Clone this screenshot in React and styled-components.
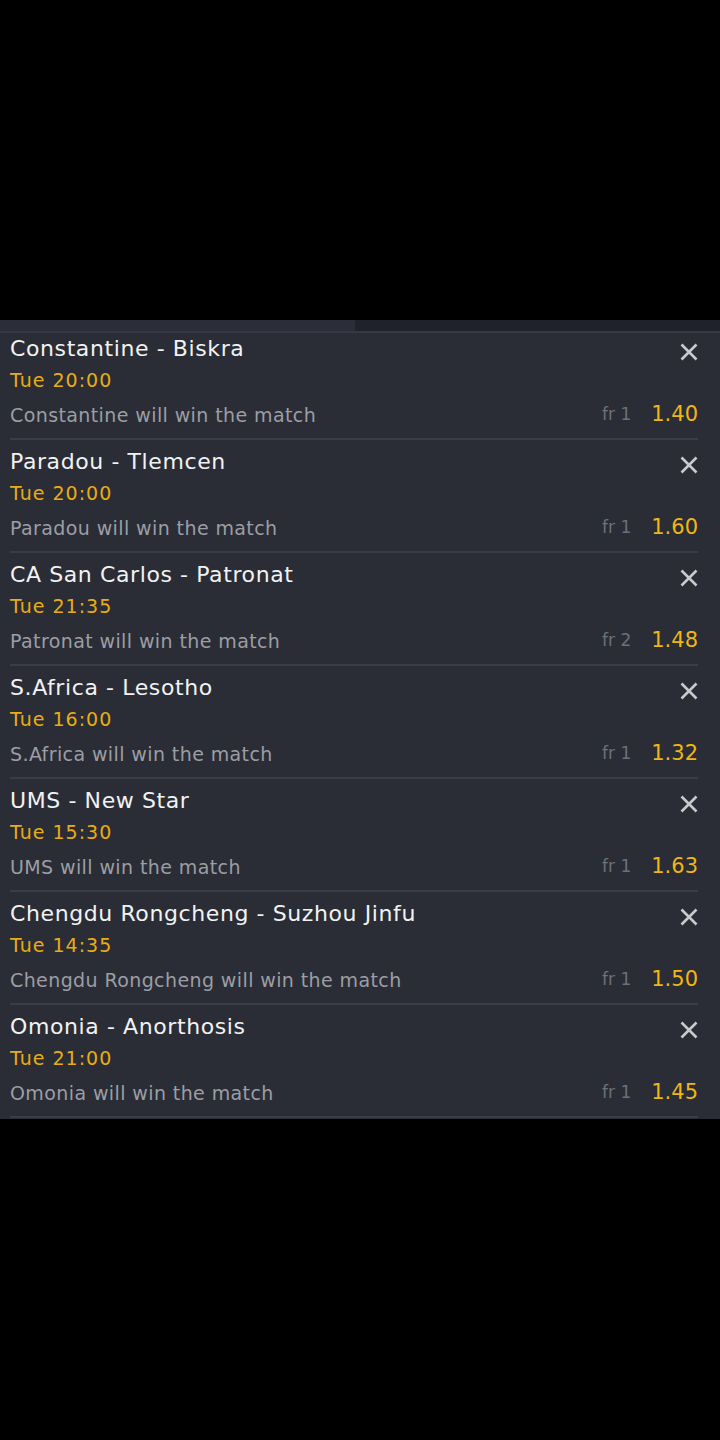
import React from "react";
import styled, { createGlobalStyle } from "styled-components";

const bets = [
  { match: "Constantine - Biskra", time: "Tue 20:00", pick: "Constantine will win the match", fr: "fr 1", odds: "1.40" },
  { match: "Paradou - Tlemcen", time: "Tue 20:00", pick: "Paradou will win the match", fr: "fr 1", odds: "1.60" },
  { match: "CA San Carlos - Patronat", time: "Tue 21:35", pick: "Patronat will win the match", fr: "fr 2", odds: "1.48" },
  { match: "S.Africa - Lesotho", time: "Tue 16:00", pick: "S.Africa will win the match", fr: "fr 1", odds: "1.32" },
  { match: "UMS - New Star", time: "Tue 15:30", pick: "UMS will win the match", fr: "fr 1", odds: "1.63" },
  { match: "Chengdu Rongcheng - Suzhou Jinfu", time: "Tue 14:35", pick: "Chengdu Rongcheng will win the match", fr: "fr 1", odds: "1.50" },
  { match: "Omonia - Anorthosis", time: "Tue 21:00", pick: "Omonia will win the match", fr: "fr 1", odds: "1.45" },
];

function CloseIcon() {
  return (
    <svg width="18" height="18" viewBox="0 0 18 18">
      <path d="M1.5 1.5 L16.5 16.5 M16.5 1.5 L1.5 16.5" stroke="#c9cacd" strokeWidth="2.6" fill="none" />
    </svg>
  );
}

export default function App() {
  return (
    <>
      <GlobalStyle />
      <Screen>
        <Panel>
          <TabStrip>
            <Tab active />
            <Tab />
          </TabStrip>
          <List>
            <Scroller>
              {bets.map((b) => (
                <Row key={b.match}>
                  <Info>
                    <Match>{b.match}</Match>
                    <Time>{b.time}</Time>
                    <Pick>{b.pick}</Pick>
                  </Info>
                  <Side>
                    <Close>
                      <CloseIcon />
                    </Close>
                    <OddsLine>
                      <Fr>{b.fr}</Fr>
                      <Odds>{b.odds}</Odds>
                    </OddsLine>
                  </Side>
                </Row>
              ))}
            </Scroller>
          </List>
        </Panel>
      </Screen>
    </>
  );
}

const GlobalStyle = createGlobalStyle`
  body {
    margin: 0;
    background: #000;
    font-family: "DejaVu Sans", "Open Sans", sans-serif;
  }
`;

const Screen = styled.div`
  width: 720px;
  height: 1440px;
  background: #000;
  padding-top: 320px;
  box-sizing: border-box;
`;

const Panel = styled.div`
  background: #2a2d36;
  height: 799px;
  display: flex;
  flex-direction: column;
`;

const TabStrip = styled.div`
  display: flex;
  height: 11px;
  border-bottom: 2px solid #363943;
`;

const Tab = styled.div`
  flex: ${(p) => (p.active ? "0 0 355px" : "1")};
  background: ${(p) => (p.active ? "#2b2e38" : "#1f222a")};
`;

const List = styled.div`
  flex: 1;
  overflow: hidden;
`;

const Scroller = styled.div`
  margin-top: -6px;
`;

const Row = styled.div`
  display: flex;
  justify-content: space-between;
  margin: 0 22px 0 10px;
  height: 113px;
  box-sizing: border-box;
  padding-top: 7px;
  border-bottom: 2px solid #3a3d47;
`;

const Info = styled.div`
  display: flex;
  flex-direction: column;
`;

const Match = styled.div`
  color: #f2f2f2;
  font-size: 22px;
  line-height: 30px;
  letter-spacing: 0.6px;
`;

const Time = styled.div`
  color: #e9ac12;
  font-size: 19px;
  line-height: 32px;
  letter-spacing: 1px;
`;

const Pick = styled.div`
  color: #9c9ea4;
  font-size: 19px;
  line-height: 38px;
  letter-spacing: 0.4px;
`;

const Side = styled.div`
  display: flex;
  flex-direction: column;
  align-items: flex-end;
`;

const Close = styled.div`
  width: 18px;
  height: 18px;
  margin-top: 9px;
  display: flex;
`;

const OddsLine = styled.div`
  display: flex;
  align-items: center;
  gap: 20px;
  margin-top: 41px;
`;

const Fr = styled.span`
  color: #6d7077;
  font-size: 17px;
`;

const Odds = styled.span`
  color: #f0b614;
  font-size: 21px;
`;
